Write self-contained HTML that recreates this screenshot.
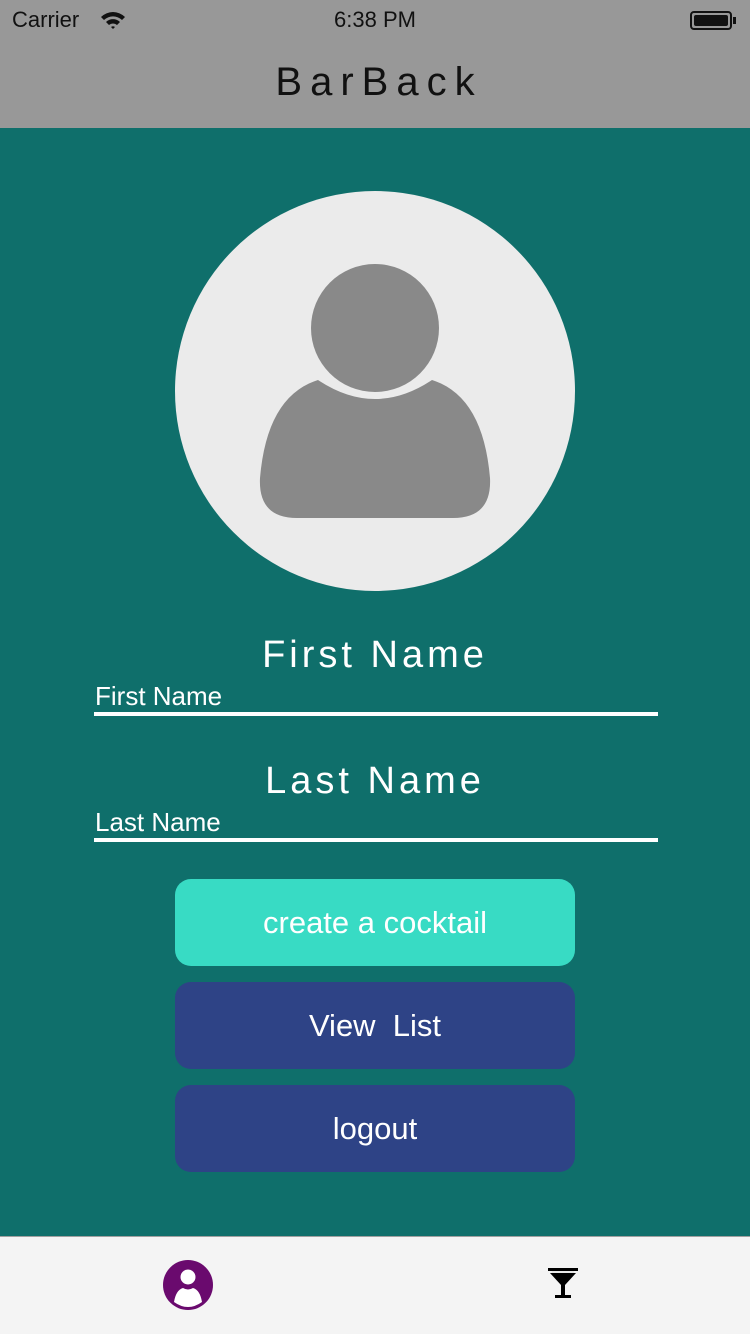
<!DOCTYPE html>
<html><head><meta charset="utf-8"><style>
*{margin:0;padding:0;box-sizing:border-box}
body{width:750px;height:1334px;position:relative;background:#0f6f6b;font-family:"Liberation Sans",sans-serif;overflow:hidden}
.hdr{position:absolute;left:0;top:0;width:750px;height:128px;background:#989898}
.abs{position:absolute}
.btn{position:absolute;left:175px;width:400px;height:87px;border-radius:16px;color:#fff;font-size:31px;text-align:center;line-height:87px}
.line{position:absolute;left:94px;width:564px;height:4px;background:#fff}
</style></head><body>
<div class="hdr"></div>
<div class="abs" style="left:12px;top:7px;font-size:22px;color:#111">Carrier</div>
<svg class="abs" style="left:100px;top:10px" width="26" height="20" viewBox="0 0 26 20"><path d="M1 7 A17 17 0 0 1 25 7 L22 10 A13 13 0 0 0 4 10Z M6 12 A10 10 0 0 1 20 12 L17 15 A6 6 0 0 0 9 15Z M11 17 A3 3 0 0 1 15 17 L13 19Z" fill="#111"/></svg>
<div class="abs" style="left:0;width:750px;top:7px;text-align:center;font-size:22px;color:#111">6:38 PM</div>
<div class="abs" style="left:690px;top:11px;width:42px;height:19px;border:2px solid #111;border-radius:4px;padding:2px"><div style="width:100%;height:100%;background:#111;border-radius:2px"></div></div>
<div class="abs" style="left:733px;top:17px;width:3px;height:7px;background:#111"></div>
<div class="abs" style="left:0;width:750px;top:60px;text-align:center;font-size:40px;letter-spacing:8px;color:#111;padding-left:8px">BarBack</div>
<div class="abs" style="left:175px;top:191px;width:400px;height:400px;border-radius:50%;background:#ebebeb"></div>
<div class="abs" style="left:311px;top:264px;width:128px;height:128px;border-radius:50%;background:#898989"></div>
<svg class="abs" style="left:258px;top:378px" width="234" height="142" viewBox="0 0 234 142"><path d="M60 2 Q117 40 174 2 Q225 18 232 100 Q234 140 195 140 L39 140 Q0 140 2 100 Q9 18 60 2Z" fill="#898989"/></svg>
<div class="abs" style="left:0;width:750px;top:634px;text-align:center;font-size:38px;letter-spacing:4px;color:#fff">First Name</div>
<div class="abs" style="left:95px;top:681px;font-size:26px;color:#fff">First Name</div>
<div class="line" style="top:712px"></div>
<div class="abs" style="left:0;width:750px;top:760px;text-align:center;font-size:38px;letter-spacing:4px;color:#fff">Last Name</div>
<div class="abs" style="left:95px;top:807px;font-size:26px;color:#fff">Last Name</div>
<div class="line" style="top:838px"></div>
<div class="btn" style="top:879px;background:#38dbc4">create a cocktail</div>
<div class="btn" style="top:982px;background:#2e4386">View&nbsp; List</div>
<div class="btn" style="top:1085px;background:#2e4386">logout</div>
<div class="abs" style="left:0;top:1236px;width:750px;height:98px;background:#f4f4f4;border-top:1px solid #a0a0a0"></div>
<svg class="abs" style="left:163px;top:1260px" width="50" height="50" viewBox="0 0 50 50"><circle cx="25" cy="25" r="25" fill="#6a0a6e"/><path d="M11 42 Q13 30 20 28 Q25 31 30 28 Q37 30 39 42 Q25 52 11 42Z" fill="#fff"/><circle cx="25" cy="17" r="10" fill="#6a0a6e"/><circle cx="25" cy="17" r="7.5" fill="#fff"/></svg>
<svg class="abs" style="left:548px;top:1268px" width="30" height="30" viewBox="0 0 30 30"><rect x="0" y="0" width="30" height="3" fill="#000"/><path d="M2 5 H28 L17 17 V27 H23 V30 H7 V27 H13 V17Z" fill="#000"/><rect x="4" y="3" width="22" height="2" fill="#e8e8e8"/></svg>
</body></html>
